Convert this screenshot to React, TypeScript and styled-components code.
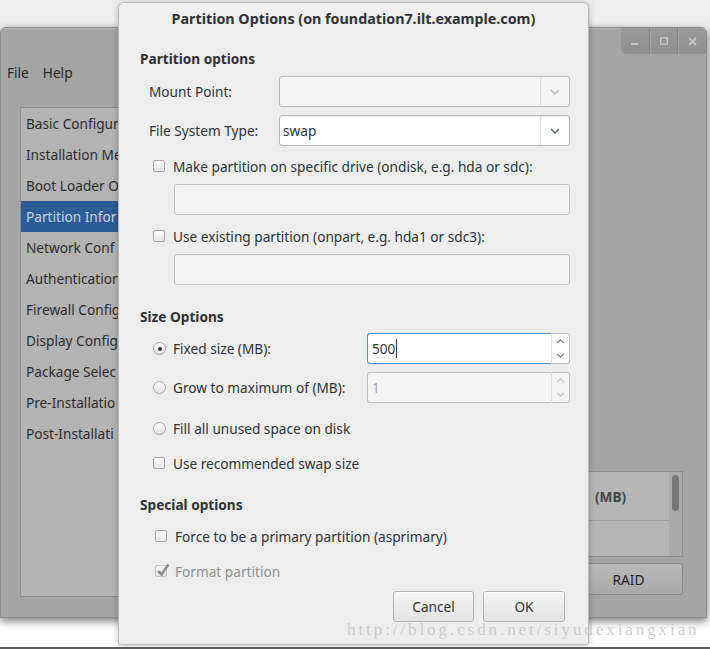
import React from "react";
import styled, { createGlobalStyle } from "styled-components";

const Global = createGlobalStyle`
  html, body { margin: 0; padding: 0; }
  body {
    font-family: "Noto Sans", "Open Sans", sans-serif;
    font-size: 13.65px;
    color: #2e3436;
    background: #ffffff;
  }
  * { box-sizing: border-box; }
`;

/* ---------- desktop ---------- */
const Desktop = styled.div`
  position: relative;
  width: 710px;
  height: 649px;
  overflow: hidden;
  background: linear-gradient(#eeeeee 0, #eeeeee 320px, #ffffff 320px);
  border-bottom: 2px solid #5c5c5c;
`;

/* ---------- background (dimmed) main window ---------- */
const BgWindow = styled.div`
  position: absolute;
  left: 0;
  top: 27px;
  width: 707px;
  height: 591px;
  background: #a4a4a4;
  border: 1px solid #8d8d8d;
  border-radius: 6px 6px 0 0;
  box-shadow: 0 3px 9px rgba(0, 0, 0, 0.55);
  display: flex;
  flex-direction: column;
  color: #2a2a2a;
`;

const HeaderBar = styled.div`
  height: 25px;
  display: flex;
  justify-content: flex-end;
  border-top: 1px solid #b4b4b4;
  border-radius: 6px 6px 0 0;
`;

const WinControls = styled.div`
  width: 85px;
  height: 26px;
  margin-top: -1px;
  display: flex;
  background: linear-gradient(#9a9a9a, #8f8f8f);
  border-bottom-left-radius: 6px;
  border-top-right-radius: 6px;
  overflow: hidden;
`;

const WinButton = styled.div`
  flex: 1;
  display: flex;
  align-items: center;
  justify-content: center;
  border-left: 1px solid #858585;
  box-shadow: inset 1px 0 0 #a3a3a3;
  color: #c4c4c4;
  &:first-child { border-left: none; box-shadow: none; }
`;

const MenuBar = styled.div`
  height: 38px;
  display: flex;
  align-items: center;
  gap: 14px;
  padding-left: 6px;
  color: #262626;
`;

const WinContent = styled.div`
  margin-top: 16px;
  height: 490px;
  display: flex;
  justify-content: space-between;
  padding: 0 23px 0 19px;
`;

const ListBox = styled.div`
  width: 100px;
  background: #b3b3b3;
  border: 1px solid #8e8e8e;
  display: flex;
  flex-direction: column;
  overflow: hidden;
`;

const ListItem = styled.div<{ $selected?: boolean }>`
  height: 31px;
  line-height: 31px;
  padding-left: 5px;
  white-space: nowrap;
  overflow: hidden;
  text-overflow: clip;
  background: ${(p) => (p.$selected ? "#2d5d96" : "transparent")};
  color: ${(p) => (p.$selected ? "#c9d3e0" : "#2c2c2c")};
`;

const RightPane = styled.div`
  width: 97px;
  display: flex;
  flex-direction: column;
  justify-content: flex-end;
  gap: 6px;
  padding-bottom: 2px;
`;

const Table = styled.div`
  height: 86px;
  display: flex;
  border: 1px solid #8c8c8c;
  background: #b5b5b5;
`;

const TableMain = styled.div`
  flex: 1;
  display: flex;
  flex-direction: column;
`;

const TableHeader = styled.div`
  height: 49px;
  display: flex;
  align-items: center;
  padding-left: 8px;
  border-bottom: 1px solid #9a9a9a;
  font-weight: 700;
  color: #444444;
`;

const TableRow = styled.div`
  flex: 1;
`;

const ScrollTrack = styled.div`
  width: 13px;
  background: #a9a9a9;
  padding: 3px 3px;
`;

const ScrollThumb = styled.div`
  width: 7px;
  height: 36px;
  border-radius: 4px;
  background: #777777;
`;

const BgButton = styled.div`
  height: 32px;
  display: flex;
  align-items: center;
  justify-content: center;
  padding-right: 12px;
  border: 1px solid #868686;
  border-radius: 3px;
  background: linear-gradient(#b9b9b9, #a9a9a9);
  color: #222;
`;

/* ---------- dialog ---------- */
const Dialog = styled.div`
  position: absolute;
  left: 118px;
  top: 2px;
  width: 471px;
  height: 643px;
  background: #ededed;
  border: 1px solid #b9b9b9;
  border-radius: 6px 6px 3px 3px;
  box-shadow: 0 1px 6px rgba(0, 0, 0, 0.25);
  display: flex;
  flex-direction: column;
`;

const TitleBar = styled.div`
  height: 31px;
  display: flex;
  align-items: center;
  justify-content: center;
  font-size: 14.3px;
  font-weight: 700;
  color: #2e3436;
  border-radius: 6px 6px 0 0;
  background: linear-gradient(#f0f0f0, #ededed);
`;

const Body = styled.div`
  display: flex;
  flex-direction: column;
  padding: 0 18px 0 21px;
`;

const SectionTitle = styled.div<{ $mt: number }>`
  margin-top: ${(p) => p.$mt}px;
  height: 20px;
  line-height: 20px;
  font-weight: 700;
`;

const FieldRow = styled.div<{ $mt: number }>`
  margin-top: ${(p) => p.$mt}px;
  height: 31px;
  display: flex;
  align-items: center;
  padding-left: 9px;
`;

const FieldLabel = styled.div`
  width: 130px;
`;

const Combo = styled.div<{ $disabled?: boolean }>`
  flex: 1;
  height: 31px;
  display: flex;
  border: 1px solid #b6b6b6;
  border-radius: 3px;
  background: ${(p) => (p.$disabled ? "#f4f4f4" : "#ffffff")};
  box-shadow: ${(p) => (p.$disabled ? "none" : "inset 0 1px 1px rgba(0,0,0,0.06)")};
`;

const ComboText = styled.div`
  flex: 1;
  display: flex;
  align-items: center;
  padding-left: 3px;
  color: #2e3436;
`;

const ComboButton = styled.div<{ $disabled?: boolean }>`
  width: 29px;
  display: flex;
  align-items: center;
  justify-content: center;
  border-left: 1px solid #dddddd;
  color: ${(p) => (p.$disabled ? "#b8b8b8" : "#555c5e")};
`;

const CheckRow = styled.div<{ $mt: number; $indent?: number; $gap?: number; $disabled?: boolean }>`
  margin-top: ${(p) => p.$mt}px;
  height: 20px;
  display: flex;
  align-items: center;
  gap: ${(p) => p.$gap ?? 8}px;
  padding-left: ${(p) => p.$indent ?? 13}px;
  color: ${(p) => (p.$disabled ? "#8d9192" : "#2e3436")};
`;

const CheckBoxBox = styled.div`
  width: 12px;
  height: 12px;
  border: 1px solid #a6a6a6;
  border-radius: 2px;
  background: linear-gradient(#ffffff, #e4e4e4);
  flex: none;
`;

const DisabledCheck = styled.div`
  position: relative;
  width: 12px;
  height: 12px;
  flex: none;
  border: 1px solid #c2c2c2;
  border-radius: 2px;
  background: linear-gradient(#f2f2f2, #e4e4e4);
  & > svg { position: absolute; left: -1px; top: -4px; }
`;

const Radio = styled.div<{ $checked?: boolean }>`
  width: 13px;
  height: 13px;
  flex: none;
  border: 1px solid #a6a6a6;
  border-radius: 50%;
  background: linear-gradient(#ffffff, #e4e4e4);
  display: flex;
  align-items: center;
  justify-content: center;
  &::after {
    content: "";
    width: 4px;
    height: 4px;
    border-radius: 50%;
    background: ${(p) => (p.$checked ? "#2e3436" : "transparent")};
  }
`;

const Entry = styled.div<{ $mt: number }>`
  margin-top: ${(p) => p.$mt}px;
  margin-left: 34px;
  height: 31px;
  border: 1px solid #c0c0c0;
  border-radius: 3px;
  background: #f4f4f4;
`;

const SpinRow = styled.div<{ $mt: number }>`
  margin-top: ${(p) => p.$mt}px;
  height: 31px;
  display: flex;
  align-items: center;
  gap: 7px;
  padding-left: 13px;
`;

const Spin = styled.div`
  margin-left: auto;
  width: 203px;
  height: 31px;
  display: flex;
`;

const SpinEntry = styled.div<{ $focused?: boolean; $disabled?: boolean }>`
  flex: 1;
  display: flex;
  align-items: center;
  padding-left: 4px;
  border: 1px solid ${(p) => (p.$focused ? "#4a90d9" : "#bdbdbd")};
  border-right: none;
  border-radius: 3px 0 0 3px;
  background: ${(p) => (p.$disabled ? "#f4f4f4" : "#ffffff")};
  color: ${(p) => (p.$disabled ? "#a3a6a7" : "#2e3436")};
`;

const Caret = styled.span`
  display: inline-block;
  width: 1px;
  height: 19px;
  margin-left: 1px;
  background: #2e3436;
`;

const SpinButtons = styled.div<{ $disabled?: boolean }>`
  width: 19px;
  display: flex;
  flex-direction: column;
  border: 1px solid #bdbdbd;
  border-left: 1px solid #dcdcdc;
  border-radius: 0 3px 3px 0;
  background: ${(p) => (p.$disabled ? "#f4f4f4" : "#ffffff")};
  color: ${(p) => (p.$disabled ? "#c0c0c0" : "#6f7475")};
`;

const SpinArrow = styled.div`
  flex: 1;
  display: flex;
  align-items: center;
  justify-content: center;
`;

const ButtonRow = styled.div<{ $mt: number }>`
  margin-top: ${(p) => p.$mt}px;
  height: 31px;
  display: flex;
  justify-content: flex-end;
  gap: 9px;
  padding-right: 5px;
`;

const DlgButton = styled.div<{ $w: number }>`
  width: ${(p) => p.$w}px;
  display: flex;
  align-items: center;
  justify-content: center;
  border: 1px solid #b1b1b1;
  border-radius: 3px;
  background: linear-gradient(#f6f6f6, #e3e3e3);
  box-shadow: inset 0 1px 0 #ffffff;
  color: #2e3436;
`;

const Watermark = styled.div`
  position: absolute;
  left: 347px;
  top: 619px;
  font-family: "Liberation Serif", "DejaVu Serif", serif;
  font-size: 17px;
  letter-spacing: 2.92px;
  line-height: 22px;
  color: rgba(192, 192, 192, 0.78);
  white-space: nowrap;
  pointer-events: none;
`;

/* ---------- icons ---------- */
const ChevronDown = ({ w = 10, h = 6 }: { w?: number; h?: number }) => (
  <svg width={w} height={h} viewBox="0 0 10 6">
    <path d="M1 1 L5 5 L9 1" fill="none" stroke="currentColor" strokeWidth="1.4" />
  </svg>
);

const ChevronUp = ({ w = 10, h = 6 }: { w?: number; h?: number }) => (
  <svg width={w} height={h} viewBox="0 0 10 6">
    <path d="M1 5 L5 1 L9 5" fill="none" stroke="currentColor" strokeWidth="1.4" />
  </svg>
);

const CheckMark = () => (
  <svg width="16" height="16" viewBox="0 0 16 16">
    <path d="M3 9 L6.5 12.5 L13.5 2.5" fill="none" stroke="#8f8f8f" strokeWidth="2.6" />
  </svg>
);

const listItems = [
  "Basic Configur",
  "Installation Me",
  "Boot Loader O",
  "Partition Infor",
  "Network Conf",
  "Authentication",
  "Firewall Config",
  "Display Config",
  "Package Selec",
  "Pre-Installatio",
  "Post-Installati",
];

export default function App() {
  return (
    <Desktop>
      <Global />
      <BgWindow>
        <HeaderBar>
          <WinControls>
            <WinButton>
              <svg width="8" height="8" viewBox="0 0 8 8">
                <rect x="0" y="6" width="7" height="2" fill="currentColor" />
              </svg>
            </WinButton>
            <WinButton>
              <svg width="8" height="8" viewBox="0 0 8 8">
                <rect x="0.75" y="0.75" width="6.5" height="6.5" fill="none" stroke="currentColor" strokeWidth="1.5" />
              </svg>
            </WinButton>
            <WinButton>
              <svg width="9" height="9" viewBox="0 0 9 9">
                <path d="M1 1 L8 8 M8 1 L1 8" stroke="currentColor" strokeWidth="2" />
              </svg>
            </WinButton>
          </WinControls>
        </HeaderBar>
        <MenuBar>
          <span>File</span>
          <span>Help</span>
        </MenuBar>
        <WinContent>
          <ListBox>
            {listItems.map((t, i) => (
              <ListItem key={t} $selected={i === 3}>
                {t}
              </ListItem>
            ))}
          </ListBox>
          <RightPane>
            <Table>
              <TableMain>
                <TableHeader>(MB)</TableHeader>
                <TableRow />
              </TableMain>
              <ScrollTrack>
                <ScrollThumb />
              </ScrollTrack>
            </Table>
            <BgButton>RAID</BgButton>
          </RightPane>
        </WinContent>
      </BgWindow>

      <Dialog>
        <TitleBar>Partition Options (on foundation7.ilt.example.com)</TitleBar>
        <Body>
          <SectionTitle $mt={15}>Partition options</SectionTitle>
          <FieldRow $mt={7}>
            <FieldLabel>Mount Point:</FieldLabel>
            <Combo $disabled>
              <ComboText />
              <ComboButton $disabled>
                <ChevronDown />
              </ComboButton>
            </Combo>
          </FieldRow>
          <FieldRow $mt={8}>
            <FieldLabel>File System Type:</FieldLabel>
            <Combo>
              <ComboText>swap</ComboText>
              <ComboButton>
                <ChevronDown />
              </ComboButton>
            </Combo>
          </FieldRow>
          <CheckRow $mt={10}>
            <CheckBoxBox />
            <span>Make partition on specific drive (ondisk, e.g. hda or sdc):</span>
          </CheckRow>
          <Entry $mt={8} />
          <CheckRow $mt={11}>
            <CheckBoxBox />
            <span>Use existing partition (onpart, e.g. hda1 or sdc3):</span>
          </CheckRow>
          <Entry $mt={8} />

          <SectionTitle $mt={22}>Size Options</SectionTitle>
          <SpinRow $mt={6}>
            <Radio $checked />
            <span>Fixed size (MB):</span>
            <Spin>
              <SpinEntry $focused>
                500
                <Caret />
              </SpinEntry>
              <SpinButtons>
                <SpinArrow>
                  <ChevronUp w={9} h={5} />
                </SpinArrow>
                <SpinArrow>
                  <ChevronDown w={9} h={5} />
                </SpinArrow>
              </SpinButtons>
            </Spin>
          </SpinRow>
          <SpinRow $mt={8}>
            <Radio />
            <span>Grow to maximum of (MB):</span>
            <Spin>
              <SpinEntry $disabled>1</SpinEntry>
              <SpinButtons $disabled>
                <SpinArrow>
                  <ChevronUp w={9} h={5} />
                </SpinArrow>
                <SpinArrow>
                  <ChevronDown w={9} h={5} />
                </SpinArrow>
              </SpinButtons>
            </Spin>
          </SpinRow>
          <CheckRow $mt={15} $gap={7}>
            <Radio />
            <span>Fill all unused space on disk</span>
          </CheckRow>
          <CheckRow $mt={15}>
            <CheckBoxBox />
            <span>Use recommended swap size</span>
          </CheckRow>

          <SectionTitle $mt={22}>Special options</SectionTitle>
          <CheckRow $mt={11} $indent={15}>
            <CheckBoxBox />
            <span>Force to be a primary partition (asprimary)</span>
          </CheckRow>
          <CheckRow $mt={15} $indent={15} $disabled>
            <DisabledCheck>
              <CheckMark />
            </DisabledCheck>
            <span>Format partition</span>
          </CheckRow>
          <ButtonRow $mt={10}>
            <DlgButton $w={81}>Cancel</DlgButton>
            <DlgButton $w={82}>OK</DlgButton>
          </ButtonRow>
        </Body>
      </Dialog>

      <Watermark>http://blog.csdn.net/siyudexiangxian</Watermark>
    </Desktop>
  );
}
